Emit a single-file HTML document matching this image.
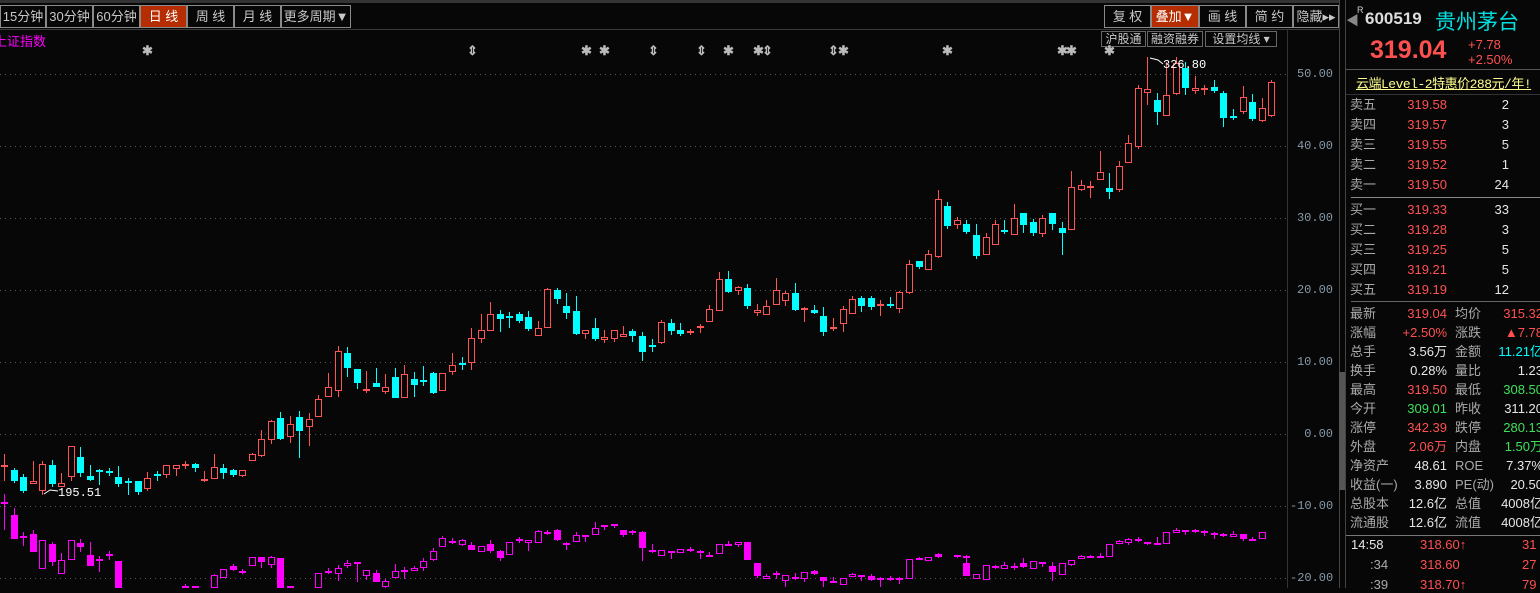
<!DOCTYPE html>
<html><head><meta charset="utf-8">
<style>
*{margin:0;padding:0;box-sizing:border-box}
body{width:1540px;height:588px;background:#070707;overflow:hidden;position:relative;font-family:"Liberation Sans","Noto Sans CJK SC",sans-serif;color:#ccc}
.a{position:absolute;white-space:nowrap}
.btn{position:absolute;top:5px;height:23px;border:1px solid #8a8a8a;color:#c8c8c8;font-size:13px;line-height:21px;text-align:center;background:#070707}
.btn.on{background:#b52d00;color:#fff}
.b2{position:absolute;top:31px;height:16px;border:1px solid #666;color:#c8c8c8;font-size:12px;line-height:14px;text-align:center}
.r{position:absolute;font-size:13px;line-height:16px;white-space:nowrap}
.lb{color:#aaa}.red{color:#ff5050}.grn{color:#3ee05a}.wht{color:#e6e6e6}.cy{color:#00ffff}
.ax{position:absolute;left:1290px;width:43px;text-align:right;font-size:12px;color:#8899a8;font-family:"Liberation Mono",monospace}
</style></head><body>
<div class="a" style="left:0;top:0;width:1340px;height:3px;background:#333"></div>
<div class="a" style="left:0;top:29px;width:1340px;height:1px;background:#3a3a3a"></div>
<div class="btn" style="left:0;width:46px">15分钟</div>
<div class="btn" style="left:46px;width:47px">30分钟</div>
<div class="btn" style="left:93px;width:47px">60分钟</div>
<div class="btn on" style="left:140px;width:47px">日 线</div>
<div class="btn" style="left:187px;width:47px">周 线</div>
<div class="btn" style="left:234px;width:47px">月 线</div>
<div class="btn" style="left:281px;width:70px">更多周期▼</div>
<div class="btn" style="left:1104px;width:47px">复 权</div>
<div class="btn on" style="left:1151px;width:48px">叠加▼</div>
<div class="btn" style="left:1199px;width:47px">画 线</div>
<div class="btn" style="left:1246px;width:47px">简 约</div>
<div class="btn" style="left:1293px;width:46px">隐藏▸▸</div>
<div class="b2" style="left:1101px;width:45px">沪股通</div>
<div class="b2" style="left:1147px;width:56px">融资融券</div>
<div class="b2" style="left:1205px;width:72px">设置均线 ▾</div>
<div class="a" style="left:-6px;top:31px;font-size:13px;color:#ff00ff">上证指数</div>

<svg class="a" style="left:0;top:0" width="1345" height="588" id="ch">
<g stroke="#555" stroke-dasharray="1,4" stroke-width="1">
<line x1="0" x2="1287" y1="74.5" y2="74.5"/><line x1="0" x2="1287" y1="146.5" y2="146.5"/><line x1="0" x2="1287" y1="218.5" y2="218.5"/><line x1="0" x2="1287" y1="290.5" y2="290.5"/><line x1="0" x2="1287" y1="362.5" y2="362.5"/><line x1="0" x2="1287" y1="434.5" y2="434.5"/><line x1="0" x2="1287" y1="506.5" y2="506.5"/><line x1="0" x2="1287" y1="578.5" y2="578.5"/>
</g>
<line x1="1287.5" x2="1287.5" y1="30" y2="588" stroke="#333"/>
<line x1="1339.5" x2="1339.5" y1="0" y2="588" stroke="#444"/>
<rect x="1339" y="372" width="6" height="118" fill="#555"/>
<g id="cg"></g>
<g fill="#bbb" font-size="13" font-family="Liberation Sans,sans-serif" font-weight="bold">
<text x="142" y="55">✱</text><text x="467" y="55">⇕</text><text x="581" y="55">✱</text><text x="599" y="55">✱</text><text x="648" y="55">⇕</text><text x="696" y="55">⇕</text><text x="723" y="55">✱</text><text x="753" y="55">✱</text><text x="762" y="55">⇕</text><text x="828" y="55">⇕</text><text x="838" y="55">✱</text><text x="942" y="55">✱</text><text x="1057" y="55">✱</text><text x="1066" y="55">✱</text><text x="1104" y="55">✱</text>
</g>
<g fill="#fff" font-size="12" font-family="Liberation Mono,monospace">
<text x="1163" y="68">326.80</text><path d="M1150 58 L1158 60 L1163 64" stroke="#fff" fill="none"/>
<text x="58" y="496">195.51</text><path d="M44 494 L50 490 L58 491" stroke="#fff" fill="none"/>
</g>
</svg>
<div class="ax" style="top:67px">50.00</div><div class="ax" style="top:139px">40.00</div><div class="ax" style="top:211px">30.00</div><div class="ax" style="top:283px">20.00</div><div class="ax" style="top:355px">10.00</div><div class="ax" style="top:427px">0.00</div><div class="ax" style="top:499px">-10.00</div><div class="ax" style="top:571px">-20.00</div>

<div class="a" style="left:1345px;top:0;width:1px;height:588px;background:#444"></div>
<div class="a" style="left:1346px;top:10px;font-size:13px;color:#888">◀</div>
<div class="a" style="left:1357px;top:5px;font-size:9px;color:#ccc">R</div>
<div class="a" style="left:1365px;top:9px;font-size:17px;color:#ddd;font-weight:bold">600519</div>
<div class="a" style="left:1435px;top:6px;font-size:21px;color:#00e0e0">贵州茅台</div>
<div class="a" style="left:1370px;top:36px;font-size:25px;color:#ff5050;font-weight:bold">319.04</div>
<div class="a" style="left:1468px;top:37px;font-size:13px;color:#ff5050;line-height:15px">+7.78<br>+2.50%</div>
<div class="a" style="left:1346px;top:69px;width:194px;height:1px;background:#555"></div>
<div class="a" style="left:1356px;top:73px;font-size:13px;color:#ffff90;text-decoration:underline;font-family:'Liberation Mono','Noto Sans CJK SC',monospace;letter-spacing:-0.5px">云端Level-2特惠价288元/年!</div>
<div class="a" style="left:1346px;top:94px;width:194px;height:1px;background:#333"></div>
<div class="a" style="left:1351px;top:197px;width:189px;height:1px;background:#888"></div>
<div class="a" style="left:1351px;top:301px;width:189px;height:1px;background:#666"></div>
<div class="a" style="left:1346px;top:535px;width:194px;height:1px;background:#777"></div>
<div id="rp"></div>
<script>
var C=[[4,467,465,454,481],[14,470,481,468,483,1],[23,477,491,474,493,1],[33,484,481,461,484],[42,491,464,461,495],[52,465,484,460,487,1],[61,487,483,473,487],[71,477,446,446,481],[80,457,473,447,477,1],[90,476,480,465,481,1],[99,470,471,469,485,1],[109,471,472,468,476,1],[118,477,484,466,487,1],[128,481,482,478,495,1],[138,481,492,481,495,1],[147,489,478,472,491],[157,474,476,471,481,1],[166,475,465,465,478],[176,469,465,465,476],[185,464,465,461,469],[195,464,468,463,472,1],[204,481,479,471,482],[214,479,467,454,479],[223,468,473,464,479,1],[233,470,475,469,477,1],[242,476,470,470,477],[252,461,454,453,461],[261,456,439,430,457],[271,440,421,420,444],[280,418,439,412,440,1],[290,437,424,416,443],[299,417,431,411,458,1],[309,427,419,413,446],[318,417,399,395,417],[328,397,387,373,397],[338,391,351,346,397],[347,353,368,347,377,1],[357,369,383,369,389,1],[366,390,389,371,393],[376,383,387,368,387,1],[385,392,387,374,394],[395,377,398,368,398,1],[404,398,374,365,398],[414,379,385,372,397,1],[423,380,381,366,386,1],[433,373,393,372,394,1],[442,391,373,373,391],[452,372,365,353,375],[462,363,364,357,370,1],[471,363,338,328,370],[481,339,330,314,343],[490,331,314,302,331],[500,314,319,310,332,1],[509,316,317,312,328,1],[519,314,321,312,323,1],[528,317,329,311,331,1],[538,336,328,321,336],[547,328,289,288,328],[557,290,299,288,304,1],[566,306,313,293,319,1],[576,311,334,296,335,1],[585,334,330,330,339],[595,328,339,318,341,1],[604,340,337,330,343],[614,339,330,330,342],[623,337,334,326,337],[632,331,336,329,342,1],[642,336,352,332,361,1],[652,345,346,339,352,1],[661,343,322,320,344],[671,323,331,319,335,1],[680,330,334,323,336,1],[690,331,332,329,335],[700,328,326,324,333],[709,322,309,305,322],[719,311,279,272,311],[728,279,292,271,293,1],[738,291,287,286,295],[747,288,306,284,309,1],[757,313,310,304,316],[766,315,306,300,315],[776,305,290,278,305],[785,301,293,291,306],[795,293,310,283,311,1],[804,310,308,307,322],[814,310,313,305,314,1],[823,316,332,307,336,1],[833,329,327,318,331],[843,324,309,306,332],[852,314,299,296,314],[861,298,306,296,312,1],[871,298,307,296,310,1],[880,306,304,300,316],[890,304,305,297,308,1],[899,309,292,291,313],[909,293,264,260,294],[919,261,267,261,269,1],[928,270,254,250,270],[938,257,199,190,258],[947,206,226,202,229,1],[957,225,220,217,229],[966,224,232,220,234,1],[976,235,256,224,259,1],[986,255,237,233,255],[995,245,224,220,245],[1004,230,231,220,234,1],[1014,235,218,204,235],[1023,213,225,213,233,1],[1033,222,233,219,236,1],[1042,234,218,215,237],[1052,213,224,213,230,1],[1062,228,233,222,255,1],[1071,230,187,171,230],[1081,190,185,180,191],[1090,188,186,181,198],[1100,180,172,151,180],[1109,188,192,173,199,1],[1119,190,166,161,192],[1128,163,143,135,163],[1138,147,88,85,149],[1147,93,89,57,105],[1157,100,112,93,125,1],[1166,116,95,62,116],[1176,94,63,57,95],[1185,68,88,62,95,1],[1195,91,88,76,94],[1204,89,88,85,95],[1214,87,91,80,93,1],[1223,93,118,91,127,1],[1233,116,117,109,120,1],[1243,112,97,86,114],[1252,102,119,94,121,1],[1262,121,108,98,122],[1271,116,82,80,117]];
var M=[[4,502,504,1,494,530],[12,515,539,1,508,539],[19,536,538,1,532,546],[27,534,552,1,530,552],[35,540,569,0,540,569],[43,544,562,1,542,566],[50,560,574,0,553,574],[58,540,560,0,540,560],[66,543,547,1,539,552],[74,555,566,1,542,566],[81,559,561,1,556,572],[89,554,556,1,551,560],[97,561,588,1,561,588],[151,586,588,1,584,588],[159,586,588,1,586,588],[175,575,588,0,574,588],[182,569,578,0,569,578],[190,566,570,1,564,571],[198,571,573,1,569,574],[206,557,566,0,557,566],[213,557,562,1,557,568],[221,557,565,0,556,568],[229,558,588,1,558,588],[237,586,588,1,586,588],[260,573,588,0,573,588],[268,571,573,0,568,574],[276,568,574,0,565,581],[284,563,566,0,560,568],[292,562,564,1,562,582],[300,570,576,0,570,580],[307,573,582,1,570,582],[315,581,587,0,579,588],[323,571,578,0,564,578],[330,570,572,0,567,579],[338,568,571,0,566,571],[346,561,568,0,558,571],[354,551,560,0,548,561],[362,538,547,0,536,547],[370,541,543,1,538,544],[377,540,545,0,539,546],[385,545,550,1,542,550],[393,546,552,0,546,552],[400,544,551,1,540,553],[408,551,558,1,550,561],[416,542,555,0,542,555],[424,539,541,1,537,543],[431,540,543,0,540,551],[439,531,543,0,530,543],[447,532,534,0,530,535],[454,530,540,1,529,541],[462,543,545,1,542,550],[470,535,542,0,532,542],[478,535,537,1,536,542],[486,528,535,0,522,535],[493,525,526,1,525,530],[501,524,526,1,524,528],[509,530,535,1,530,537],[516,531,533,1,530,535],[642,532,548,1,531,561],[650,550,552,1,544,553],[658,550,556,0,550,556],[665,551,553,1,551,559],[673,549,553,0,549,553],[680,549,551,1,547,552],[688,551,553,1,550,559],[695,555,556,1,552,556],[704,544,554,0,544,554],[712,544,546,1,541,546],[720,542,545,0,542,547],[728,542,560,1,542,560],[735,563,576,1,563,578],[742,576,579,0,574,579],[750,573,575,1,571,579],[757,575,581,0,575,587],[765,577,579,1,573,580],[772,572,579,0,572,582],[780,571,574,1,570,575],[787,577,581,1,577,587],[796,581,583,1,577,583],[803,578,585,0,578,585],[811,574,577,0,573,577],[818,575,577,1,575,581],[826,576,580,1,574,581],[833,578,580,0,577,587],[841,578,580,1,576,581],[849,578,580,0,577,584],[857,559,579,0,559,579],[865,558,560,1,557,560],[872,557,561,0,557,561],[880,555,557,1,553,558],[887,554,555,1,553,558],[895,555,556,1,555,558],[903,556,557,1,555,561],[910,563,576,1,560,576],[918,574,579,0,574,579],[925,565,580,0,565,580],[933,566,568,1,565,569],[940,565,569,0,562,569],[949,566,568,1,563,570],[956,563,567,1,558,568],[964,561,569,0,561,569],[972,562,564,1,562,567],[979,566,572,1,562,581],[987,563,575,0,563,575],[995,560,565,0,560,566],[1002,556,559,0,555,559],[1010,556,557,1,555,558],[1018,556,557,1,553,557],[1025,544,557,0,544,557],[1033,541,544,0,540,544],[1040,539,543,0,538,545],[1048,539,541,1,537,542],[1056,542,544,1,542,545],[1063,543,544,1,537,544],[1071,532,544,0,532,544],[1079,530,533,0,528,533],[1086,530,532,1,530,535],[1094,530,531,1,529,533],[1102,531,533,1,530,536],[1110,533,534,1,532,539],[1117,534,535,1,533,537],[1125,534,537,0,531,537],[1133,534,539,1,534,541],[1140,539,541,1,537,541],[1148,532,539,0,532,539]];
var XS=C.map(function(c){return c[0]});
function snap(v){var b=XS[0];XS.forEach(function(x){if(Math.abs(x-v)<Math.abs(b-v))b=x});return b;}
var s='';
M.forEach(function(m){var r=m[0]<600?m[0]*1.2245:640+(m[0]-640)*1.2245;var x=snap(r);
 s+='<line x1="'+(x+.5)+'" x2="'+(x+.5)+'" y1="'+m[4]+'" y2="'+m[5]+'" stroke="#ff00ff"/>';
 var h=Math.max(m[2]-m[1],1);
 if(m[3])s+='<rect x="'+(x-3)+'" y="'+m[1]+'" width="7" height="'+(h<2?2:h)+'" fill="#ff00ff"/>';
 else s+='<rect x="'+(x-2.5)+'" y="'+(m[1]+.5)+'" width="6" height="'+(h-1)+'" fill="#070707" stroke="#ff00ff"/>';});
C.forEach(function(c){var x=c[0],cy=c[5],col=cy?'#00ffff':'#ff5454';var t=Math.min(c[1],c[2]),b=Math.max(c[1],c[2]);
 s+='<line x1="'+(x+.5)+'" x2="'+(x+.5)+'" y1="'+c[3]+'" y2="'+c[4]+'" stroke="'+col+'"/>';
 if(b-t<2){s+='<rect x="'+(x-3)+'" y="'+t+'" width="7" height="2" fill="'+col+'"/>';}
 else if(cy)s+='<rect x="'+(x-3)+'" y="'+t+'" width="7" height="'+(b-t)+'" fill="'+col+'"/>';
 else s+='<rect x="'+(x-2.5)+'" y="'+(t+.5)+'" width="6" height="'+(b-t-1)+'" fill="#070707" stroke="'+col+'"/>';});
document.getElementById('cg').innerHTML=s;
var ob=[['卖五','319.58','2'],['卖四','319.57','3'],['卖三','319.55','5'],['卖二','319.52','1'],['卖一','319.50','24'],['买一','319.33','33'],['买二','319.28','3'],['买三','319.25','5'],['买四','319.21','5'],['买五','319.19','12']];
var h='';
ob.forEach(function(o,i){var y=i<5?97+i*20:202+(i-5)*20;
 h+='<div class="r lb" style="left:1350px;top:'+y+'px">'+o[0]+'</div><div class="r red" style="left:1380px;width:67px;text-align:right;top:'+y+'px">'+o[1]+'</div><div class="r wht" style="left:1470px;width:39px;text-align:right;top:'+y+'px">'+o[2]+'</div>';});
var st=[['最新','319.04','red','均价','315.32','red'],['涨幅','+2.50%','red','涨跌','▲7.78','red'],['总手','3.56万','wht','金额','11.21亿','cy'],['换手','0.28%','wht','量比','1.23','wht'],['最高','319.50','red','最低','308.50','grn'],['今开','309.01','grn','昨收','311.20','wht'],['涨停','342.39','red','跌停','280.13','grn'],['外盘','2.06万','red','内盘','1.50万','grn'],['净资产','48.61','wht','ROE','7.37%','wht'],['收益(一)','3.890','wht','PE(动)','20.50','wht'],['总股本','12.6亿','wht','总值','4008亿','wht'],['流通股','12.6亿','wht','流值','4008亿','wht']];
st.forEach(function(o,i){var y=306+i*19;
 h+='<div class="r lb" style="left:1350px;top:'+y+'px">'+o[0]+'</div><div class="r '+o[2]+'" style="left:1390px;width:57px;text-align:right;top:'+y+'px">'+o[1]+'</div><div class="r lb" style="left:1455px;top:'+y+'px">'+o[3]+'</div><div class="r '+o[5]+'" style="left:1470px;width:73px;text-align:right;top:'+y+'px">'+o[4]+'</div>';});
var tk=[['14:58','318.60↑','31'],[':34','318.60','27'],[':39','318.70↑','79']];
tk.forEach(function(o,i){var y=537+i*20;
 h+='<div class="r '+(i?'lb':'wht')+'" style="left:'+(i?1370:1351)+'px;top:'+y+'px">'+o[0]+'</div><div class="r red" style="left:1420px;top:'+y+'px">'+o[1]+'</div><div class="r red" style="left:1522px;top:'+y+'px">'+o[2]+'</div>';});
document.getElementById('rp').innerHTML=h;
</script>
</body></html>
